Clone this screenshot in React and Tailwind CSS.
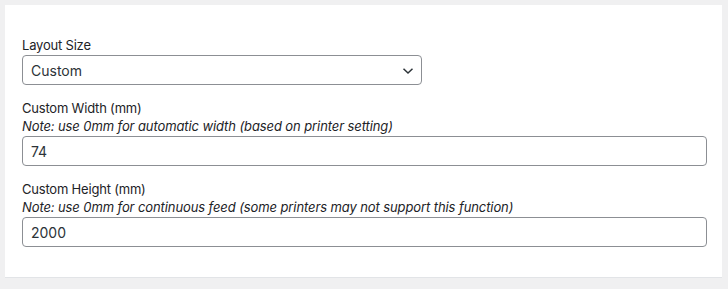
const Field = ({ label, note, value }) => (
	<div className="flex flex-col">
		<label className="text-[13px] leading-[18px] tracking-[-0.2px] text-[#1d2327]">{label}</label>
		{note && <p className="text-[13px] leading-[18px] tracking-[-0.1px] italic text-[#1d2327]">{note}</p>}
		<input
			type="text"
			defaultValue={value}
			className="mt-[1px] w-[685px] h-[30px] px-2 rounded border border-[#8c8f94] bg-white text-[14px] text-[#2c3338] focus:outline-none"
		/>
	</div>
);

const App = () => {
	return (
		<div className="w-[728px] h-[289px] bg-[#f0f0f1] pt-[5px] pl-[5px]" style={{ fontFamily: 'Inter, "Liberation Sans", Arial, sans-serif' }}>
			<div className="w-[717px] h-[273px] bg-white border-b border-[#e2e4e7] pl-[17px] pt-[31px] flex flex-col gap-[14px]">
				<div className="flex flex-col">
					<label className="text-[13px] leading-[18px] tracking-[-0.2px] text-[#1d2327]">Layout Size</label>
					<div className="relative mt-[1px] w-[400px] h-[30px] rounded border border-[#8c8f94] flex items-center px-2">
						<span className="text-[14px] text-[#2c3338]">Custom</span>
						<svg className="absolute right-[7px] top-[11px]" width="12" height="8" viewBox="0 0 12 8" fill="none">
							<path d="M1.5 1.8 L6 6 L10.5 1.8" stroke="#2c3338" strokeWidth="1.5" />
						</svg>
					</div>
				</div>
				<Field
					label="Custom Width (mm)"
					note="Note: use 0mm for automatic width (based on printer setting)"
					value="74"
				/>
				<Field
					label="Custom Height (mm)"
					note="Note: use 0mm for continuous feed (some printers may not support this function)"
					value="2000"
				/>
			</div>
		</div>
	);
};

export default App;
